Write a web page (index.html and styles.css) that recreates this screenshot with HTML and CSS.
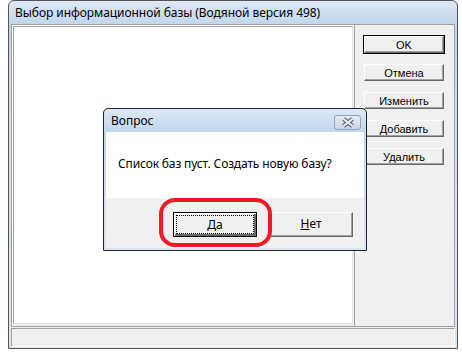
FILE: index.html
```html
<!DOCTYPE html>
<html>
  <head>
    <meta charset="UTF-8" />
    <title>Выбор информационной базы</title>
    <link rel="stylesheet" href="styles.css">
  </head>

  <body>
    <div class="window">
      <div class="titlebar">Выбор информационной базы (Водяной версия 498)</div>
      <div class="client">
        <div class="main">
          <div class="listpanel">
            <div class="list"></div>
          </div>
          <div class="buttons">
            <button class="btn default">OK</button>
            <button class="btn">Отмена</button>
            <button class="btn">Изменить</button>
            <button class="btn">Добавить</button>
            <button class="btn">Удалить</button>
          </div>
        </div>
        <div class="statusbar"></div>
      </div>
    </div>

    <div class="dialog">
      <div class="dlg-title">
        <span>Вопрос</span>
        <span class="close">
          <svg width="14" height="11" viewBox="0 0 14 11">
            <path d="M2.5 2 L11.5 9 M11.5 2 L2.5 9" stroke="#5c6470" stroke-width="4.2" fill="none" />
            <path d="M2.5 2 L11.5 9 M11.5 2 L2.5 9" stroke="#eef1f5" stroke-width="2" fill="none" />
          </svg>
        </span>
      </div>
      <div class="dlg-client">
        <div class="message">Список баз пуст. Создать новую базу?</div>
        <div class="dlg-footer">
          <button class="dbtn focused"><span class="focus"><u>Д</u>а</span></button>
          <button class="dbtn"><span class="focus"><u>Н</u>ет</span></button>
        </div>
      </div>
    </div>

    <div class="mark"></div>
  </body>
</html>
```

FILE: styles.css
```css
body {
  margin: 0;
  background: #fff;
  font-family: "Noto Sans", sans-serif;
}

.window {
  margin-left: 8px;
  width: 450px;
  height: 349px;
  box-sizing: border-box;
  border: 1px solid #555;
  border-radius: 6px 6px 0 0;
  background: linear-gradient(#dce8f5, #c2d5ec 24px, #cfdef0 120px, #dbe6f3);
  display: flex;
  flex-direction: column;
}

.titlebar {
  height: 23px;
  line-height: 23px;
  padding-left: 6px;
  font-size: 12px;
  letter-spacing: -0.06px;
  color: #000;
  white-space: nowrap;
}

.client {
  flex: 1;
  margin: 0 2px 1px 2px;
  background: #f0f0f0;
  display: flex;
  flex-direction: column;
}

.main {
  height: 303px;
  display: flex;
}

.listpanel {
  width: 344px;
  box-sizing: border-box;
  border: 1px solid #a0a0a0;
  box-shadow: inset 1px 1px #fff;
  padding: 1px 1px 2px 1px;
  display: flex;
}

.list {
  flex: 1;
  background: #fff;
  border: 1px solid;
  border-color: #a0a0a0 #e3e3e3 #e3e3e3 #a0a0a0;
}

.buttons {
  flex: 1;
  box-sizing: border-box;
  border: 1px solid #a0a0a0;
  border-left: none;
  padding: 11px 0 0 9px;
  display: flex;
  flex-direction: column;
  gap: 11px;
}

.btn {
  width: 80px;
  height: 17px;
  padding: 0;
  font: 11px "Liberation Sans", sans-serif;
  color: #000;
  background: #f0f0f0;
  border: 1px solid;
  border-color: #fff #696969 #696969 #fff;
  box-shadow: inset -1px -1px #a0a0a0;
}

.btn.default {
  outline: 1px solid #000;
  outline-offset: 0;
}

.statusbar {
  margin-top: 1px;
  height: 19px;
  box-sizing: border-box;
  border: 1px solid;
  border-color: #a0a0a0 #fff #fff #a0a0a0;
}

.dialog {
  position: absolute;
  left: 103px;
  top: 108px;
  width: 264px;
  height: 143px;
  box-sizing: border-box;
  border: 1px solid #222;
  border-radius: 5px 5px 0 0;
  background: linear-gradient(#dce8f5, #c2d5ec 24px, #cfdef0 80px, #d9e5f2);
  display: flex;
  flex-direction: column;
}

.dlg-title {
  height: 23px;
  padding: 0 5px 0 7px;
  display: flex;
  align-items: center;
  justify-content: space-between;
  font-size: 12px;
}

.close {
  width: 27px;
  height: 15px;
  box-sizing: border-box;
  border: 1px solid #8fa4bd;
  border-radius: 3px;
  background: linear-gradient(#e4ecf6, #c6d5e7);
  display: flex;
  align-items: center;
  justify-content: center;
  margin-top: 4px;
}

.dlg-client {
  flex: 1;
  margin: 0 2px 2px 2px;
  background: #f0f0f0;
  display: flex;
  flex-direction: column;
}

.message {
  height: 66px;
  box-sizing: border-box;
  padding: 23px 0 0 12px;
  background: #fff;
  font-size: 12px;
  letter-spacing: -0.14px;
  color: #000;
  white-space: nowrap;
}

.dlg-footer {
  padding: 14px 0 0 67px;
  display: flex;
  gap: 12px;
}

.dbtn {
  width: 84px;
  height: 25px;
  padding: 2px;
  box-sizing: border-box;
  font: 12px "Noto Sans", sans-serif;
  color: #000;
  background: #f0f0f0;
  border: 1px solid;
  border-color: #fff #696969 #696969 #fff;
  box-shadow: inset -1px -1px #a0a0a0;
}

.dbtn.focused {
  border-color: #000;
  box-shadow: inset 1px 1px #fff, inset -2px -2px #696969;
}

.focus {
  display: block;
  height: 100%;
  box-sizing: border-box;
  line-height: 17px;
}

.focused .focus {
  border: 1px dotted #000;
}

.mark {
  position: absolute;
  left: 159px;
  top: 198px;
  width: 113px;
  height: 49px;
  box-sizing: border-box;
  border: 4px solid #ed1c24;
  border-radius: 16px;
}
```
